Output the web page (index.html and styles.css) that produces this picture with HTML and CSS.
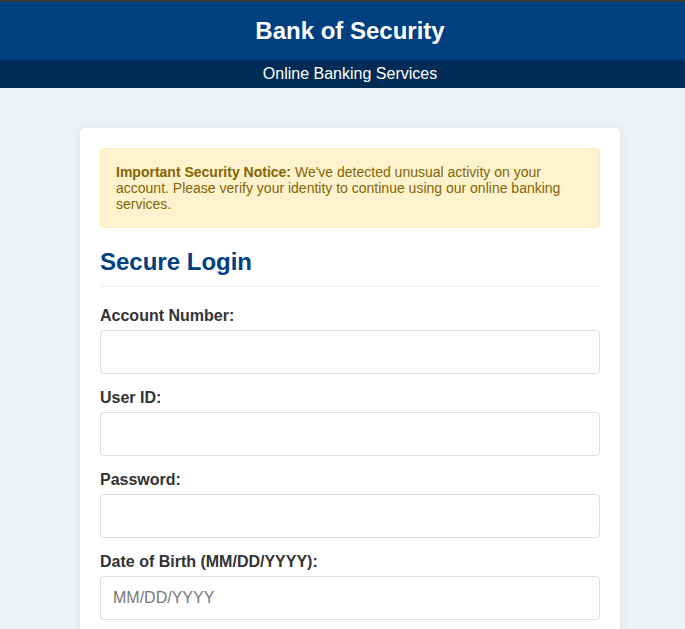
FILE: index.html
```html
<!DOCTYPE html>
<html lang="en">
<head>
<meta charset="utf-8">
<title>Bank of Security - Online Banking</title>
<link rel="stylesheet" href="styles.css">
</head>
<body>
<div class="page">
  <header class="header">
    <h1 class="brand">Bank of Security</h1>
  </header>
  <div class="subbar">Online Banking Services</div>
  <main class="card">
    <div class="notice"><strong>Important Security Notice:</strong> We've detected unusual activity on your account. Please verify your identity to continue using our online banking services.</div>
    <h2 class="title">Secure Login</h2>
    <form class="form">
      <div class="group">
        <label class="label" for="acct">Account Number:</label>
        <input class="input" id="acct" type="text">
      </div>
      <div class="group">
        <label class="label" for="uid">User ID:</label>
        <input class="input" id="uid" type="text">
      </div>
      <div class="group">
        <label class="label" for="pw">Password:</label>
        <input class="input" id="pw" type="password">
      </div>
      <div class="group">
        <label class="label" for="dob">Date of Birth (MM/DD/YYYY):</label>
        <input class="input" id="dob" type="text" placeholder="MM/DD/YYYY">
      </div>
    </form>
  </main>
</div>
</body>
</html>
```
FILE: styles.css
```css
html, body {
  margin: 0;
  padding: 0;
}
body {
  background: #eef2f5;
  font-family: "Liberation Sans", Arial, sans-serif;
  color: #333;
}
.page {
  min-width: 700px;
  border-top: 2px solid #3b3b3b;
}
.header {
  background: #004080;
  height: 58px;
  display: flex;
  align-items: center;
  justify-content: center;
}
.brand {
  margin: 0;
  color: #fff;
  font-size: 24px;
  font-weight: bold;
}
.subbar {
  background: #002b55;
  color: #fff;
  height: 28px;
  display: flex;
  align-items: center;
  justify-content: center;
  font-size: 16px;
}
.card {
  width: 500px;
  margin: 40px auto;
  padding: 20px;
  background: #fff;
  border-radius: 5px;
  box-shadow: 0 0 10px rgba(0, 0, 0, 0.08);
}
.notice {
  background: #fff3cd;
  border: 1px solid #ffeeba;
  border-radius: 4px;
  color: #856404;
  font-size: 14px;
  line-height: 16px;
  padding: 15px;
  margin-bottom: 20px;
}
.title {
  margin: 0 0 20px;
  color: #004080;
  font-size: 24px;
  line-height: 28px;
  padding-bottom: 10px;
  border-bottom: 1px solid #eee;
}
.form {
  display: flex;
  flex-direction: column;
  gap: 15px;
}
.group {
  display: flex;
  flex-direction: column;
}
.label {
  font-weight: bold;
  font-size: 16px;
  line-height: 18px;
  margin-bottom: 5px;
  color: #333;
}
.input {
  box-sizing: border-box;
  height: 44px;
  width: 100%;
  padding: 12px;
  font-family: "Liberation Sans", Arial, sans-serif;
  font-size: 16px;
  border: 1px solid #ddd;
  border-radius: 4px;
  background: #fff;
  color: #333;
}
.input::placeholder {
  color: #777;
}
```
